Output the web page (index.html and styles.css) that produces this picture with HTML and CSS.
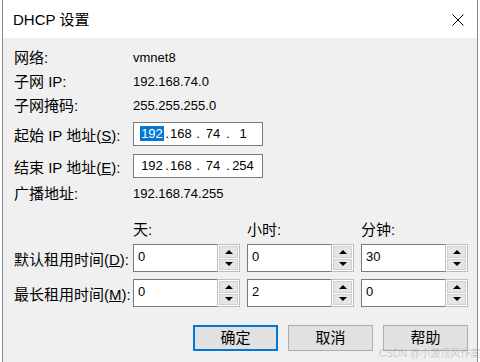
FILE: index.html
```html
<!DOCTYPE html>
<html lang="zh-CN">
<head>
  <meta charset="UTF-8">
  <title>DHCP 设置</title>
  <link rel="stylesheet" href="styles.css">
</head>
<body>

  <div class="window">
    <div class="titlebar">
      <span class="title">DHCP 设置</span>
      <svg class="close" width="12" height="12" viewBox="0 0 12 12">
        <path d="M0.5 0.5 L11.5 11.5 M11.5 0.5 L0.5 11.5" stroke="#000" stroke-width="1"/>
      </svg>
    </div>

    <div class="content">
      <div class="info-row">
        <span class="label">网络:</span>
        <span class="value">vmnet8</span>
      </div>
      <div class="info-row">
        <span class="label">子网 IP:</span>
        <span class="value">192.168.74.0</span>
      </div>
      <div class="info-row">
        <span class="label">子网掩码:</span>
        <span class="value">255.255.255.0</span>
      </div>

      <div class="ip-row first">
        <span class="label">起始 IP 地址(<u>S</u>):</span>
        <div class="ip-box">
          <span class="seg"><span class="selected">192</span></span>
          <span class="dot">.</span>
          <span class="seg left">168</span>
          <span class="dot">.</span>
          <span class="seg">74</span>
          <span class="dot">.</span>
          <span class="seg">1</span>
        </div>
      </div>
      <div class="ip-row second">
        <span class="label">结束 IP 地址(<u>E</u>):</span>
        <div class="ip-box">
          <span class="seg">192</span>
          <span class="dot">.</span>
          <span class="seg left">168</span>
          <span class="dot">.</span>
          <span class="seg">74</span>
          <span class="dot">.</span>
          <span class="seg">254</span>
        </div>
      </div>

      <div class="info-row broadcast">
        <span class="label">广播地址:</span>
        <span class="value">192.168.74.255</span>
      </div>

      <div class="lease-head">
        <span>天:</span>
        <span>小时:</span>
        <span>分钟:</span>
      </div>

      <div class="lease-row">
        <span class="label">默认租用时间(<u>D</u>):</span>
        <div class="spin">
          <div class="spin-field">0</div>
          <div class="spin-btns"><span class="up"></span><span class="down"></span></div>
        </div>
        <div class="spin">
          <div class="spin-field">0</div>
          <div class="spin-btns"><span class="up"></span><span class="down"></span></div>
        </div>
        <div class="spin">
          <div class="spin-field">30</div>
          <div class="spin-btns"><span class="up"></span><span class="down"></span></div>
        </div>
      </div>

      <div class="lease-row second">
        <span class="label">最长租用时间(<u>M</u>):</span>
        <div class="spin">
          <div class="spin-field">0</div>
          <div class="spin-btns"><span class="up"></span><span class="down"></span></div>
        </div>
        <div class="spin">
          <div class="spin-field">2</div>
          <div class="spin-btns"><span class="up"></span><span class="down"></span></div>
        </div>
        <div class="spin">
          <div class="spin-field">0</div>
          <div class="spin-btns"><span class="up"></span><span class="down"></span></div>
        </div>
      </div>

      <div class="actions">
        <button class="btn default">确定</button>
        <button class="btn">取消</button>
        <button class="btn">帮助</button>
      </div>
    </div>
  </div>

  <div class="watermark">CSDN @小菠顶风作案</div>

</body>
</html>
```

FILE: styles.css
```css
body {
  margin: 0;
  padding: 0;
  background: #ffffff;
  font-family: 'Liberation Sans', 'Noto Sans CJK SC', sans-serif;
  color: #000;
  height: 362px;
  overflow: hidden;
}

.window {
  margin-left: 2px;
  width: 474px;
  height: 362px;
  border-left: 1px solid #8a8a8a;
  border-right: 1px solid #8a8a8a;
  background: #f0f0f0;
}

.titlebar {
  height: 38px;
  background: #fff;
  display: flex;
  align-items: center;
  justify-content: space-between;
  padding: 0 13px 0 10px;
}

.title {
  font-size: 15px;
  line-height: 20px;
  margin-top: 2px;
}

.close {
  display: block;
  margin-top: 1px;
}

.content {
  padding: 8px 9px 0 11px;
}

.label {
  display: inline-block;
  width: 119px;
  font-size: 15px;
  white-space: nowrap;
}

.info-row {
  display: flex;
  align-items: center;
  height: 24px;
  line-height: 24px;
}

.value {
  font-size: 13px;
}

.ip-row {
  display: flex;
  align-items: center;
  height: 24px;
  margin-top: 4px;
}

.ip-row.second {
  margin-top: 8px;
}

.ip-box {
  width: 122px;
  height: 22px;
  border: 1px solid #7a7a7a;
  background: #fff;
  display: flex;
  align-items: center;
  padding-left: 6px;
  box-sizing: content-box;
  font-size: 13px;
  line-height: 14px;
}

.ip-box .seg {
  width: 24px;
  text-align: center;
}

.ip-box .seg.left {
  width: 25px;
  text-align: left;
}

.ip-box .dot {
  width: 6px;
  text-align: center;
}

.selected {
  background: #0078d7;
  color: #fff;
  padding: 0 1px;
}

.broadcast {
  margin-top: 4px;
}

.lease-head {
  display: flex;
  gap: 7px;
  padding-left: 119px;
  margin-top: 12px;
  height: 24px;
  line-height: 24px;
  font-size: 15px;
}

.lease-head span {
  width: 107px;
}

.lease-row {
  display: flex;
  align-items: center;
  gap: 7px;
  margin-top: 2px;
  height: 28px;
}

.lease-row.second {
  margin-top: 7px;
}

.lease-row .label {
  width: 112px;
}

.spin {
  width: 107px;
  height: 28px;
  display: flex;
}

.spin-field {
  flex: 1;
  border: 1px solid #7a7a7a;
  border-right: none;
  background: #fff;
  font-size: 13px;
  line-height: 14px;
  padding: 5px 0 0 4px;
}

.spin-btns {
  width: 19px;
  border: 1px solid #bcbcbc;
  background: #fff;
  display: flex;
  flex-direction: column;
  gap: 1px;
  padding: 1px;
}

.spin-btns span {
  flex: 1;
  background: #e5e5e5;
  border: 1px solid #cfcfcf;
  display: flex;
  align-items: center;
  justify-content: center;
}

.spin-btns .up::after {
  content: "";
  border-left: 4px solid transparent;
  border-right: 4px solid transparent;
  border-bottom: 4px solid #000;
}

.spin-btns .down::after {
  content: "";
  border-left: 4px solid transparent;
  border-right: 4px solid transparent;
  border-top: 4px solid #000;
}

.actions {
  display: flex;
  justify-content: flex-end;
  gap: 10px;
  margin-top: 18px;
}

.btn {
  width: 85px;
  height: 26px;
  border: 1px solid #adadad;
  background: #e1e1e1;
  font-family: 'Liberation Sans', 'Noto Sans CJK SC', sans-serif;
  font-size: 15px;
  padding: 0;
  line-height: 22px;
}

.btn.default {
  border: 2px solid #0078d7;
}

.watermark {
  position: absolute;
  left: 379px;
  top: 345px;
  font-size: 10px;
  color: rgba(150, 150, 150, 0.45);
  white-space: nowrap;
}
```
